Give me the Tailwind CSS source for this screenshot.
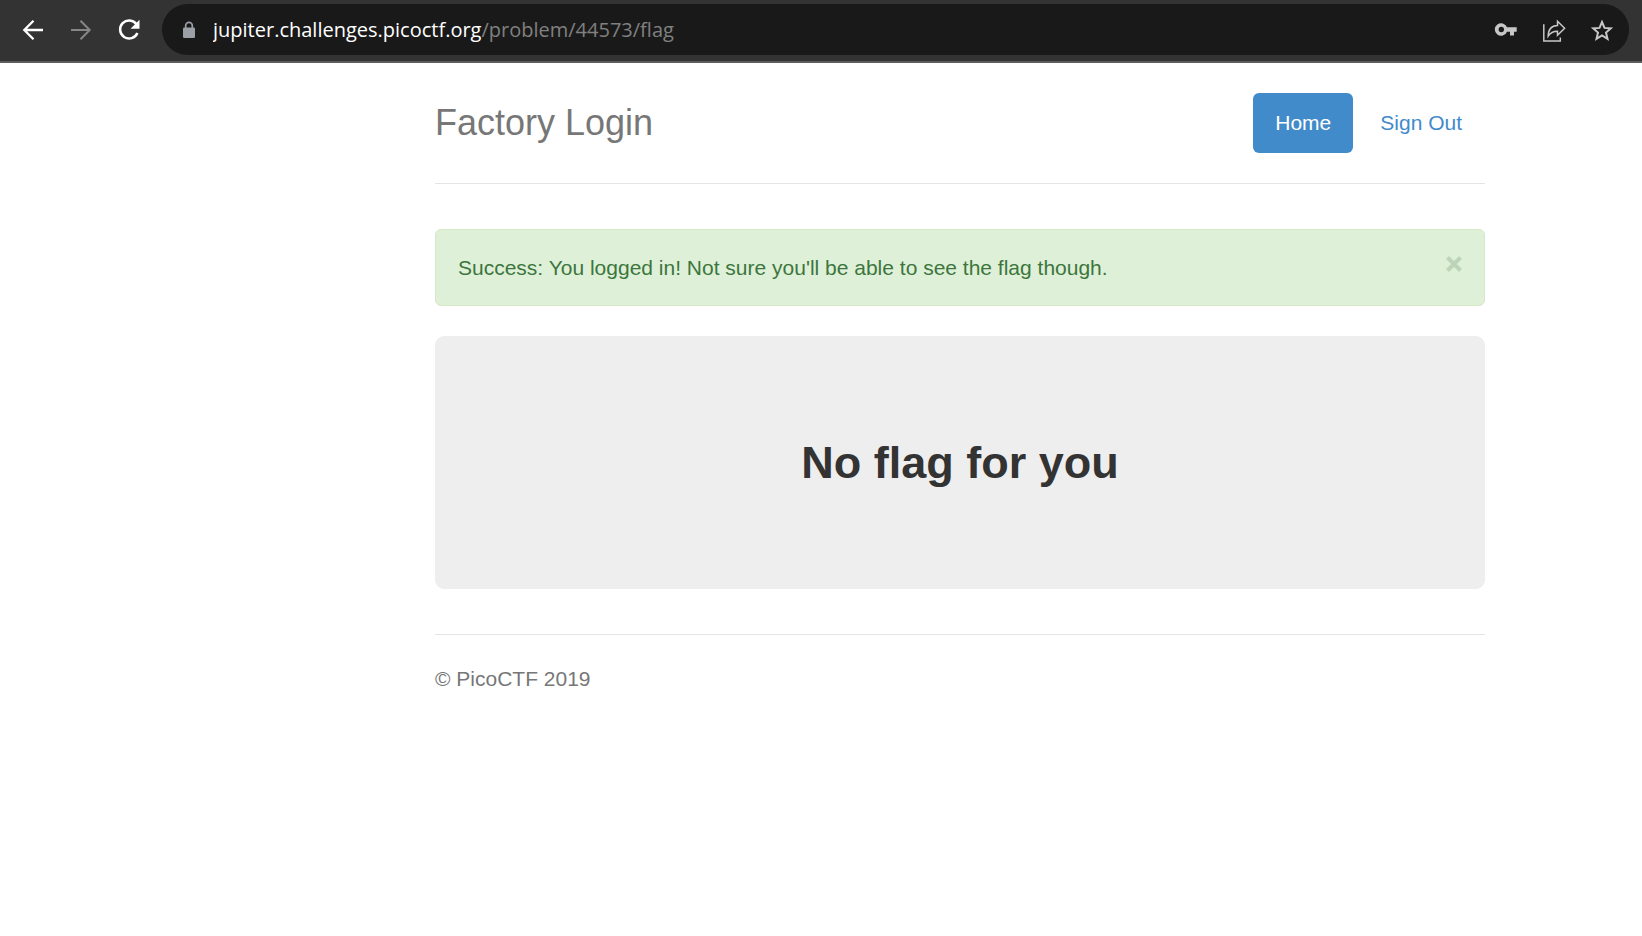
<!DOCTYPE html>
<html lang="en">
<head>
<meta charset="utf-8">
<meta name="viewport" content="width=device-width, initial-scale=1">
<title>Factory Login</title>
<script src="https://cdn.jsdelivr.net/npm/@tailwindcss/browser@4"></script>
</head>
<body class="min-h-screen bg-white font-['Liberation_Sans',Arial,sans-serif] text-[21px] leading-[30px] text-[#333333]">

<!-- Browser toolbar -->
<div class="flex h-[63px] items-start border-b-2 border-[#5c5c5c] bg-[#333333] pt-1 pr-[13px] pl-[21px]">
  <div class="flex h-[51px] shrink-0 items-center gap-6">
    <button type="button" aria-label="Back" class="size-6 text-white">
      <svg viewBox="0 0 24 24" class="size-6" fill="none" stroke="currentColor" stroke-width="2.3"><path d="M22 12H3.500M12.500 2.800L3.300 12l9.200 9.200"/></svg>
    </button>
    <button type="button" aria-label="Forward" class="size-6 text-[#868686]">
      <svg viewBox="0 0 24 24" class="size-6" fill="none" stroke="currentColor" stroke-width="2"><path d="M2 12h18.500M11.500 2.800l9.200 9.200-9.200 9.200"/></svg>
    </button>
    <button type="button" aria-label="Reload" class="size-6 text-white">
      <svg viewBox="0 0 24 24" class="size-6" fill="none" stroke="currentColor" stroke-width="2.500"><path d="M19.500 6.300A9 9 0 1 0 20.400 15"/><path d="M22.500 1.800v9h-9z" fill="currentColor" stroke="none"/></svg>
    </button>
  </div>
  <div class="ml-[21px] flex h-[51px] min-w-0 flex-1 items-center rounded-full bg-[#191919] pr-[15px] pl-5">
    <svg viewBox="0 0 14 18" class="h-[18px] w-[14px] shrink-0" fill="none" aria-hidden="true"><path d="M3.700 8V4.600a3.300 3.300 0 0 1 6.600 0V8" stroke="#9aa0a6" stroke-width="1.700"/><rect x="1" y="6.500" width="12" height="10.500" rx="1.300" fill="#9aa0a6"/></svg>
    <a href="#" class="ml-[17px] truncate font-['Open_Sans','Noto_Sans',sans-serif] text-[20px] leading-[30px] text-white">jupiter.challenges.picoctf.org<span class="text-[#808080]">/problem/44573/flag</span></a>
    <div class="ml-auto flex shrink-0 items-center gap-6 text-[#c7c7c7]">
      <button type="button" aria-label="Passwords" class="size-6">
        <svg viewBox="0 0 24 24" class="size-6" fill="currentColor"><path fill-rule="evenodd" d="M13 9.300A6.300 6.300 0 1 0 13 13.700h3V17.500h4v-3.800h2.700V9.300zM7.300 8.800a2.700 2.700 0 1 1 0 5.400 2.700 2.700 0 0 1 0-5.400z"/></svg>
      </button>
      <button type="button" aria-label="Share" class="size-6">
        <svg viewBox="0 0 24 24" class="size-6" fill="none" stroke="currentColor" stroke-width="1.500"><path d="M1.800 6.300V23H18.300v-3.500"/><path d="M6.200 18.200C6.200 11.500 9.500 7.600 15.500 7.400V3.300L22.600 10.300 15.500 17.200V13.300C11 13.200 8.300 15 6.200 18.200z" stroke-linejoin="miter"/></svg>
      </button>
      <button type="button" aria-label="Bookmark" class="size-6">
        <svg viewBox="0 0 24 24" class="size-6" fill="none" stroke="currentColor" stroke-width="2"><path d="M12 4l2.500 5.900 6.300.5-4.800 4.200 1.500 6.200-5.500-3.300-5.500 3.300L8 14.600l-4.800-4.200 6.300-.5z"/></svg>
      </button>
    </div>
  </div>
</div>

<div class="ml-[435px] max-w-[1050px]">
  <header class="mb-[45px] flex items-center justify-between border-b border-[#e5e5e5] py-[30px]">
    <h3 class="text-[36px] leading-[60px] text-[#777777]">Factory Login</h3>
    <nav class="flex gap-1">
      <a href="#" class="rounded-md bg-[#428bca] px-[22px] py-[15px] text-white">Home</a>
      <a href="#" class="rounded-md px-[23px] py-[15px] text-[#428bca]">Sign Out</a>
    </nav>
  </header>

  <main>
    <div role="alert" class="mb-[30px] flex items-start justify-between rounded-md border border-[#d6e9c6] bg-[#dff0d8] px-[22px] pt-[23px] pb-[22px] text-[#3c763d]">
      <span>Success: You logged in! Not sure you'll be able to see the flag though.</span>
      <button type="button" aria-label="Close" class="mt-[3px]">
        <svg viewBox="0 0 16 16" class="size-4" fill="none" stroke="#bdd4b8" stroke-width="4"><path d="M1.500 1.500l13 13M14.500 1.500l-13 13"/></svg>
      </button>
    </div>

    <div class="rounded-[9px] bg-[#eeeeee] px-[21px] pt-[95px] pb-[94px] text-center">
      <p class="text-[45px] leading-[64px] font-bold">No flag for you</p>
    </div>
  </main>

  <footer class="mt-[45px] border-t border-[#e5e5e5] pt-[29px] text-[#777777]">
    <p>© PicoCTF 2019</p>
  </footer>
</div>
</body>
</html>
